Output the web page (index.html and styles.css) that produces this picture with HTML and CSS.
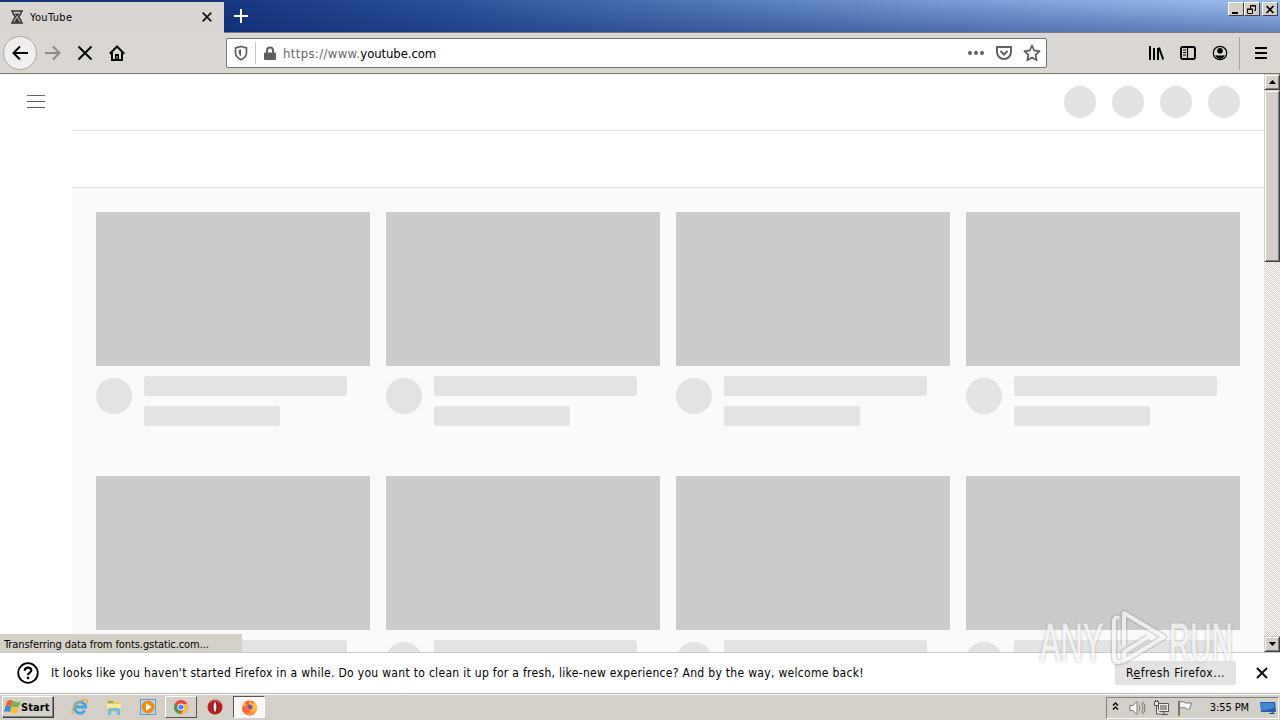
FILE: index.html
```
<!DOCTYPE html>
<html lang="en">
<head>
    <meta charset="utf-8">
    <title>YouTube</title>
    <link rel="stylesheet" href="styles.css">
</head>
<body>
    <div class="titlebar">
        <div class="tab">
            <svg width="12" height="14" viewBox="0 0 12 14" fill="none" stroke="#333" stroke-width="1.500"><path d="M0 1h12M0 13h12M2 1v2.500L4.500 7 2 10.500V13M10 1v2.500L7.500 7l2.500 3.500V13"/><path d="M3.500 3.500h5L6 7zM6 7.500l3 5H3z" fill="#333" stroke="none"/></svg>
            <span class="tab-title">YouTube</span>
            <svg class="tab-close" width="10" height="10" viewBox="0 0 10 10" stroke="#111" stroke-width="1.700"><path d="M.7.7l8.600 8.600M9.300.7L.7 9.300"/></svg>
        </div>
        <svg class="new-tab" width="14" height="14" viewBox="0 0 14 14" stroke="#fff" stroke-width="2"><path d="M7 0v14M0 7h14"/></svg>
        <div class="window-buttons">
            <span class="win-btn"><svg width="12" height="11"><path d="M2 8h6v2H2z"/></svg></span>
            <span class="win-btn"><svg width="12" height="11" fill="none" stroke="#000"><path d="M4.500 5V1.500h5v5H8M4 2h6M1.500 5.500h5v4h-5zM1 5h6"/></svg></span>
            <span class="win-btn last"><svg width="12" height="11" stroke="#000" stroke-width="1.600"><path d="M2.500 2l7 7M9.500 2l-7 7"/></svg></span>
        </div>
    </div>

    <div class="toolbar">
        <div class="back"><svg width="16" height="16" viewBox="0 0 16 16" fill="none" stroke="#000" stroke-width="2"><path d="M16 8H1.500M8 1.500L1.500 8 8 14.500"/></svg></div>
        <svg class="nav-icon" width="16" height="16" viewBox="0 0 16 16" fill="none" stroke="#8c8986" stroke-width="2"><path d="M0 8h14.500M8 1.500L14.500 8 8 14.500"/></svg>
        <svg class="nav-icon" width="16" height="16" viewBox="0 0 16 16" stroke="#000" stroke-width="2"><path d="M1.500 1.500l13 13M14.500 1.500l-13 13"/></svg>
        <svg class="nav-icon" width="16" height="16" viewBox="0 0 16 16" fill="none" stroke="#000" stroke-width="2"><path d="M.8 8.700L8 1.500l7.200 7.200M3 7.500V15h10V7.500"/><path d="M6 9h4v6H6z" fill="#000" stroke="none"/><path d="M8 11v2.500" stroke="#d8d5d0" stroke-width="1"/></svg>
        <div class="urlbar">
            <svg width="14" height="16" viewBox="0 0 14 16" fill="none" stroke="#606060" stroke-width="1.700"><path d="M7 1.500L12.500 3v4.500C12.500 11.500 10 13.500 7 14.700 4 13.500 1.500 11.500 1.500 7.500V3z"/><path d="M7 4.500v7C5 10 4.600 8.500 4.600 5z" fill="#606060" stroke="none"/></svg>
            <span class="divider"></span>
            <svg width="12" height="14" viewBox="0 0 12 14"><path d="M3 7V4.500a3 3 0 0 1 6 0V7" fill="none" stroke="#5f5f5f" stroke-width="2"/><rect y="6.500" width="12" height="7.500" rx="1" fill="#5f5f5f"/></svg>
            <span class="url"><span class="scheme">https://www.</span>youtube.com</span>
            <svg class="dots" width="16" height="16" viewBox="0 0 16 16" fill="#606060"><circle cx="2" cy="8" r="2"/><circle cx="8" cy="8" r="2"/><circle cx="14" cy="8" r="2"/></svg>
            <svg class="pocket" width="16" height="16" viewBox="0 0 16 16" fill="none" stroke="#606060" stroke-width="2"><path d="M1 2h14v5a7 7 0 0 1-14 0z"/><path d="M4.500 6L8 9.500 11.500 6"/></svg>
            <svg class="star" width="18" height="18" viewBox="0 0 18 18" fill="none" stroke="#606060" stroke-width="1.800" stroke-linejoin="round"><path d="M9 1.500l2.200 5 5.400.6-4 3.700 1.100 5.400L9 13.500l-4.700 2.700 1.100-5.400-4-3.700 5.400-.6z"/></svg>
        </div>
        <div class="tools">
            <svg width="16" height="16" viewBox="0 0 16 16" fill="none" stroke="#000" stroke-width="2"><path d="M2 1v14M6 3v12M10 3v12"/><path d="M11 2.500l4.200 12"/></svg>
            <svg width="16" height="16" viewBox="0 0 16 16" fill="none" stroke="#000" stroke-width="2"><rect x="1" y="2" width="14" height="12" rx="2"/><path d="M7.500 2v12" stroke-width="1.200"/><path d="M3 5h3M3 7.500h3M3 10h3" stroke-width="1"/></svg>
            <svg width="16" height="16" viewBox="0 0 16 16"><circle cx="8" cy="8" r="6.700" fill="none" stroke="#000" stroke-width="1.300"/><circle cx="8" cy="5.800" r="2.800"/><path d="M3.500 10c2 .8 7 .8 9 0-1 5-8 5-9 0z"/></svg>
            <span class="tool-divider"></span>
            <svg class="app-menu" width="12" height="12" viewBox="0 0 12 12" stroke="#000" stroke-width="2"><path d="M0 1h12M0 6h12M0 11h12"/></svg>
        </div>
    </div>

    <div class="viewport">
        <div class="sidebar">
            <svg width="18" height="13" viewBox="0 0 18 13" stroke="#606060"><path d="M0 .5h18M0 6.500h18M0 12.500h18"/></svg>
        </div>
        <div class="page">
            <div class="masthead"><i></i><i></i><i></i><i></i></div>
            <div class="chips"></div>
            <div class="grid">
                <div class="card"><div class="thumb"></div><div class="details"><i></i><div><b></b><b class="short"></b></div></div></div>
                <div class="card"><div class="thumb"></div><div class="details"><i></i><div><b></b><b class="short"></b></div></div></div>
                <div class="card"><div class="thumb"></div><div class="details"><i></i><div><b></b><b class="short"></b></div></div></div>
                <div class="card"><div class="thumb"></div><div class="details"><i></i><div><b></b><b class="short"></b></div></div></div>
                <div class="card"><div class="thumb"></div><div class="details"><i></i><div><b></b><b class="short"></b></div></div></div>
                <div class="card"><div class="thumb"></div><div class="details"><i></i><div><b></b><b class="short"></b></div></div></div>
                <div class="card"><div class="thumb"></div><div class="details"><i></i><div><b></b><b class="short"></b></div></div></div>
                <div class="card"><div class="thumb"></div><div class="details"><i></i><div><b></b><b class="short"></b></div></div></div>
            </div>
        </div>
        <div class="scrollbar">
            <span class="sb-btn"><svg width="7" height="4"><path d="M3.500 0L7 4H0z"/></svg></span>
            <span class="sb-thumb"></span>
            <span class="sb-btn down"><svg width="7" height="4"><path d="M0 0h7L3.500 4z"/></svg></span>
        </div>
        <div class="status"><span>Transferring data from fonts.gstatic.com...</span></div>
    </div>

    <div class="notification">
        <svg width="22" height="22" viewBox="0 0 22 22" fill="none" stroke="#000"><circle cx="11" cy="11" r="9.800" stroke-width="1.800"/><path d="M7.700 8.800C7.700 4.500 14.300 4.700 14.300 8.300c0 2.300-3.300 2.300-3.300 5" stroke-width="2.200"/><path d="M11 14.700v2.500" stroke-width="2.400"/></svg>
        <span class="message">It looks like you haven't started Firefox in a while. Do you want to clean it up for a fresh, like-new experience? And by the way, welcome back!</span>
        <button class="refresh"><span>R<u>e</u>fresh Firefox...</span></button>
        <svg class="dismiss" width="12" height="12" viewBox="0 0 12 12" stroke="#111" stroke-width="2"><path d="M1 1l10 10M11 1L1 11"/></svg>
    </div>

    <div class="taskbar">
        <div class="start">
            <svg width="17" height="16" viewBox="0 0 17 16"><path d="M3 2.500Q6 0 9 2L7.500 7.500Q5 5.500 1.500 7.500z" fill="#e8622b"/><path d="M9 2Q13 4 16.500 2.500L15 7.500Q11.500 9 7.500 7.500z" fill="#72b64c"/><path d="M1.500 7.500Q4.500 6 7.500 7.500L6 13Q3 11.500 0 13z" fill="#368bd6"/><path d="M7.500 7.500Q11 10 14.500 8L13 13.500Q10 15.500 6 13z" fill="#f5bd34"/></svg>
            <span>Start</span>
        </div>
        <div class="task"><svg width="18" height="18" viewBox="0 0 18 18" fill="none"><path d="M13.800 12.500A5.600 5.600 0 1 1 14.600 9H4" stroke="#42a5df" stroke-width="2.800"/><path d="M2 15.800C-1 13 6 3 13.500 1.700c4-.7 3 2.800 1.700 4.300" stroke="#e3ac35" stroke-width="1.300"/></svg></div>
        <div class="task"><svg width="18" height="18" viewBox="0 0 18 18"><path d="M2 2h6l1 2h7v10H2z" fill="#eecb64"/><path d="M3 3h5v2H3z" fill="#65b96c"/><path d="M2 6h14v5H2z" fill="#fae99c"/><path d="M3 17v-5q0-2 2-2h8q2 0 2 2v5h-3v-4H6v4z" fill="#70bce1"/></svg></div>
        <div class="task"><svg width="18" height="18" viewBox="0 0 18 18"><path d="M1 1h16v16H1z" fill="#5a9dcb"/><path d="M2 2h14v14H2z" fill="#b8d9ed"/><circle cx="9" cy="9" r="6.500" fill="#f28b13"/><path d="M7 5l5.500 4L7 13z" fill="#fff"/></svg></div>
        <div class="task raised"><svg width="16" height="16" viewBox="0 0 16 16"><circle cx="8" cy="8" r="7" fill="#e9483b"/><path d="M2 4.400l4 7L8 15A7 7 0 0 1 2 4.400z" fill="#36a553"/><path d="M8 15l4-7-1-3h3.300A7 7 0 0 1 8 15z" fill="#f9c830"/><circle cx="8" cy="8" r="3.500" fill="#fff"/><circle cx="8" cy="8" r="2.600" fill="#4285f4"/></svg></div>
        <div class="task opera"><svg width="16" height="16" viewBox="0 0 16 16"><circle cx="8" cy="8" r="7.500" fill="#bd1c20"/><path d="M3 4q5-5 10 0" stroke="#e86565" fill="none"/><ellipse cx="8" cy="8" rx="2" ry="5.500" fill="#eee" stroke="#6c0b12"/></svg></div>
        <div class="task active"><svg width="17" height="17" viewBox="0 0 17 17"><circle cx="8.500" cy="9" r="7.500" fill="#ff5b32"/><path d="M1 8L3 3l3 3zM8 .5q1 3 5 4l1-1q4 6 0 10-5 2-6-6z" fill="#ffc531"/><path d="M2 10q2 5 8 3 4-1 5-5-1 8-7 8-4-1-6-6z" fill="#ff9830"/><circle cx="8.500" cy="8.500" r="3" fill="#7549c8"/><path d="M3 6l5 1-2 2q3 2 5 0-1 4-4 3-4-1-4-6z" fill="#ff7a32"/></svg></div>
        <div class="tray">
            <svg class="chevrons" width="7" height="9" viewBox="0 0 7 9" fill="none" stroke="#000" stroke-width="1.400"><path d="M1 3.500L3.500 1 6 3.500M1 7.500L3.500 5 6 7.500"/></svg>
            <svg width="17" height="16" viewBox="0 0 17 16" fill="#fff" stroke="#777"><path d="M1 5.500h3l4-4v13l-4-4H1z"/><path d="M10 5q2 3 0 6M12 3q4 5 0 10M14 2q4 6 0 12" fill="none"/></svg>
            <svg class="net" width="17" height="16" viewBox="0 0 17 16" fill="#eee" stroke="#555"><path d="M5.500 3.500h10v8h-10zM8 14.500h7M11 12v2"/><path d="M7 5h7v5H7z" fill="#999" stroke="none"/><path d="M1.500 1.500h4v4h-4zM3.500 6v8h4M2.500 0v2M4.500 0v2"/></svg>
            <svg class="flag" width="17" height="16" viewBox="0 0 17 16" fill="#fff" stroke="#777"><path d="M1.500 1v14.500h1V1z"/><path d="M2.500 2q4-1 6 1h6l-2 6q-2 1-4-1-3-1-6 0z"/></svg>
            <span class="clock">3:55 PM</span>
            <svg class="desktop" width="16" height="14" viewBox="0 0 16 14"><path d="M0 1h15l1 10H1z" fill="#235ca8"/><path d="M1 2h13v5L1 10z" fill="#4386d0"/><path d="M8 13l5-2 2 2z" fill="#324861"/></svg>
        </div>
    </div>

    <div class="watermark">
        <span class="word">ANY</span>
        <svg width="58" height="60" viewBox="0 0 58 60" fill="none" stroke-linejoin="round"><g stroke="#888" stroke-opacity=".4" stroke-width="7"><path d="M14 37V5l40 24-40 24v-9l24-15M9 10Q4 8 4 14v34q0 9 8 5"/></g><g stroke="#f6f6f6" stroke-width="4"><path d="M14 37V5l40 24-40 24v-9l24-15M9 10Q4 8 4 14v34q0 9 8 5"/></g></svg>
        <span class="word run">RUN</span>
    </div>
</body>
</html>
```
FILE: styles.css
```
* {
    box-sizing: border-box;
}

body {
    margin: 0;
    width: 1280px;
    height: 720px;
    overflow: hidden;
    position: relative;
    display: flex;
    flex-direction: column;
    font-family: "DejaVu Sans Condensed", "DejaVu Sans", sans-serif;
    font-size: 11px;
    color: #000;
    background: #fff;
}

svg {
    display: block;
    flex: none;
}

span {
    white-space: nowrap;
}

.titlebar {
    height: 33px;
    flex: none;
    display: flex;
    align-items: flex-start;
    background: linear-gradient(rgba(0, 0, 0, 0), rgba(10, 40, 110, .4)), linear-gradient(90deg, #16377f 18%, #2c529a 35%, #7398d2 72%, #9fc3ef);
    border-bottom: 1px solid #777f8d;
}

.tab {
    width: 224px;
    height: 31px;
    margin-top: 2px;
    padding: 0 12px 1px 11px;
    display: flex;
    align-items: center;
    background: #d9d5d0;
}

.tab-title {
    margin-left: 7px;
    letter-spacing: .35px;
}

.tab-close {
    margin-left: auto;
}

.new-tab {
    margin: 9px 0 0 10px;
}

.window-buttons {
    display: flex;
    margin: 2px 2px 0 auto;
}

.win-btn {
    width: 16px;
    height: 14px;
    padding: 1px;
    background: #d4d0c8;
    border: 1px solid #404040;
    border-top-color: #fff;
    border-left-color: #fff;
}

.win-btn.last {
    margin-left: 2px;
}

.toolbar {
    height: 41px;
    flex: none;
    padding: 0 13px 0 3px;
    display: flex;
    align-items: center;
    background: #dad6d1;
    border-bottom: 1px solid #77776f;
}

.back {
    width: 34px;
    height: 34px;
    margin-right: 8px;
    display: flex;
    align-items: center;
    justify-content: center;
    border: 1px solid #aaa7a2;
    border-radius: 50%;
    background: #f0efed;
}

.nav-icon {
    margin-right: 16px;
}

.urlbar {
    width: 821px;
    height: 30px;
    margin-left: 85px;
    padding: 0 5px 0 7px;
    display: flex;
    align-items: center;
    background: #fff;
    border: 1px solid #74736f;
    border-radius: 2px;
}

.divider {
    width: 1px;
    height: 22px;
    margin: 0 8px 0 7px;
    background: #c8c8c8;
}

.url {
    margin-left: 7px;
    font-size: 13px;
    letter-spacing: -.1px;
}

.scheme {
    color: #666;
    letter-spacing: .35px;
}

.dots {
    margin-left: auto;
}

.pocket {
    margin-left: 12px;
}

.star {
    margin-left: 11px;
}

.tools {
    margin-left: auto;
    display: flex;
    align-items: center;
    gap: 16px;
}

.tool-divider {
    width: 1px;
    height: 33px;
    margin: 0 -1px 0 -5px;
    background: #aaa69f;
}

.viewport {
    height: 578px;
    flex: none;
    display: flex;
    overflow: hidden;
    position: relative;
}

.sidebar {
    width: 72px;
    padding: 21px 0 0 27px;
}

.page {
    width: 1192px;
    background: #fafafa;
}

.masthead {
    height: 57px;
    padding: 0 24px;
    display: flex;
    align-items: center;
    justify-content: flex-end;
    gap: 16px;
    background: #fff;
    border-bottom: 1px solid #e1e1e1;
}

.masthead i {
    width: 32px;
    height: 32px;
    border-radius: 50%;
    background: #e2e2e2;
}

.chips {
    height: 57px;
    background: #fff;
    border-bottom: 1px solid #e1e1e1;
}

.grid {
    padding: 24px 24px 0;
    display: grid;
    grid-template-columns: repeat(4, 274px);
    grid-auto-rows: 264px;
    column-gap: 16px;
}

.thumb {
    height: 154px;
    background: #cbcbcb;
}

.details {
    display: flex;
    gap: 12px;
    padding-top: 10px;
}

.details i {
    width: 36px;
    height: 36px;
    margin-top: 2px;
    border-radius: 50%;
    background: #e3e3e3;
}

.details b {
    display: block;
    width: 203px;
    height: 20px;
    margin-bottom: 10px;
    border-radius: 2px;
    background: #e3e3e3;
}

.details .short {
    width: 136px;
}

.scrollbar {
    width: 16px;
    display: flex;
    flex-direction: column;
    background: repeating-conic-gradient(#d4d0c8 0 25%, #fff 0 50%) 0 0 / 2px 2px;
}

.sb-btn,
.sb-thumb {
    background: #d4d0c8;
    border: 1px solid #404040;
    border-top-color: #d4d0c8;
    border-left-color: #d4d0c8;
    box-shadow: inset 1px 1px #fff, inset -1px -1px #808080;
}

.sb-btn {
    height: 16px;
    display: flex;
    align-items: center;
    justify-content: center;
}

.sb-thumb {
    height: 172px;
}

.down {
    margin-top: auto;
}

/* link status sits over the bottom left of the page */
.status {
    position: absolute;
    left: 0;
    bottom: 0;
    width: 242px;
    height: 18px;
    padding: 4px 0 0 4px;
    background: #d4d0c8;
    font-size: 11px;
    line-height: 13px;
    letter-spacing: -.09px;
}

.notification {
    height: 41px;
    flex: none;
    padding: 0 12px 0 17px;
    display: flex;
    align-items: center;
    background: #fff;
    border-top: 1px solid #c9c9c9;
}

.message {
    margin-left: 12px;
    font-size: 12px;
    letter-spacing: .305px;
}

.refresh {
    width: 121px;
    height: 24px;
    margin: 0 20px 0 auto;
    padding: 0;
    border: 0;
    border-radius: 2px;
    background: #e3e3e3;
    font: inherit;
    font-size: 12px;
    letter-spacing: .5px;
}

.taskbar {
    height: 27px;
    flex: none;
    padding-left: 2px;
    display: flex;
    align-items: center;
    background: #d4d0c8;
    border-top: 1px solid #bcbab4;
    box-shadow: inset 0 1px #fff;
}

.start {
    width: 52px;
    height: 22px;
    margin-right: 9px;
    padding-left: 1px;
    display: flex;
    align-items: center;
    border: 1px solid #404040;
    border-top-color: #fff;
    border-left-color: #fff;
    box-shadow: inset -1px -1px #808080;
    font-weight: bold;
}

.start span {
    font-size: 11px;
    letter-spacing: .1px;
}

.task {
    width: 34px;
    height: 22px;
    display: flex;
    align-items: center;
    justify-content: center;
}

.raised,
.active {
    width: 32px;
    border: 1px solid #555;
    border-top-color: #fff;
    border-left-color: #fff;
}

.active {
    border-color: #555 #fff #fff #555;
    background: #f8f7f5;
}

.opera {
    width: 36px;
}

.tray {
    width: 173px;
    height: 22px;
    margin: 1px 1px 0 auto;
    padding: 0 2px 0 5px;
    display: flex;
    align-items: center;
    border: 1px solid #808080;
    border-right-color: #fff;
    border-bottom-color: #fff;
}

.chevrons {
    margin-right: 10px;
    margin-bottom: 3px;
}

.net {
    margin-left: 7px;
}

.flag {
    margin-left: 7px;
}

.clock {
    margin-left: auto;
    letter-spacing: -.1px;
}

.desktop {
    margin-left: 11px;
}

/* translucent overlay above page and notification bar */
.watermark {
    position: absolute;
    left: 1040px;
    top: 608px;
    width: 194px;
    height: 60px;
    display: flex;
    align-items: flex-start;
    opacity: .75;
    pointer-events: none;
}

.watermark svg {
    margin-left: 8px;
}

.word {
    width: 62px;
    padding-top: 4px;
    font: 54px/60px "Liberation Sans", sans-serif;
    color: #f6f6f6;
    -webkit-text-stroke: 1px #f6f6f6;
    text-shadow: 0 0 4px #888;
    transform: scaleX(.57);
    transform-origin: left;
}

.run {
    margin-left: 1px;
    transform: scaleX(.545);
}
```
